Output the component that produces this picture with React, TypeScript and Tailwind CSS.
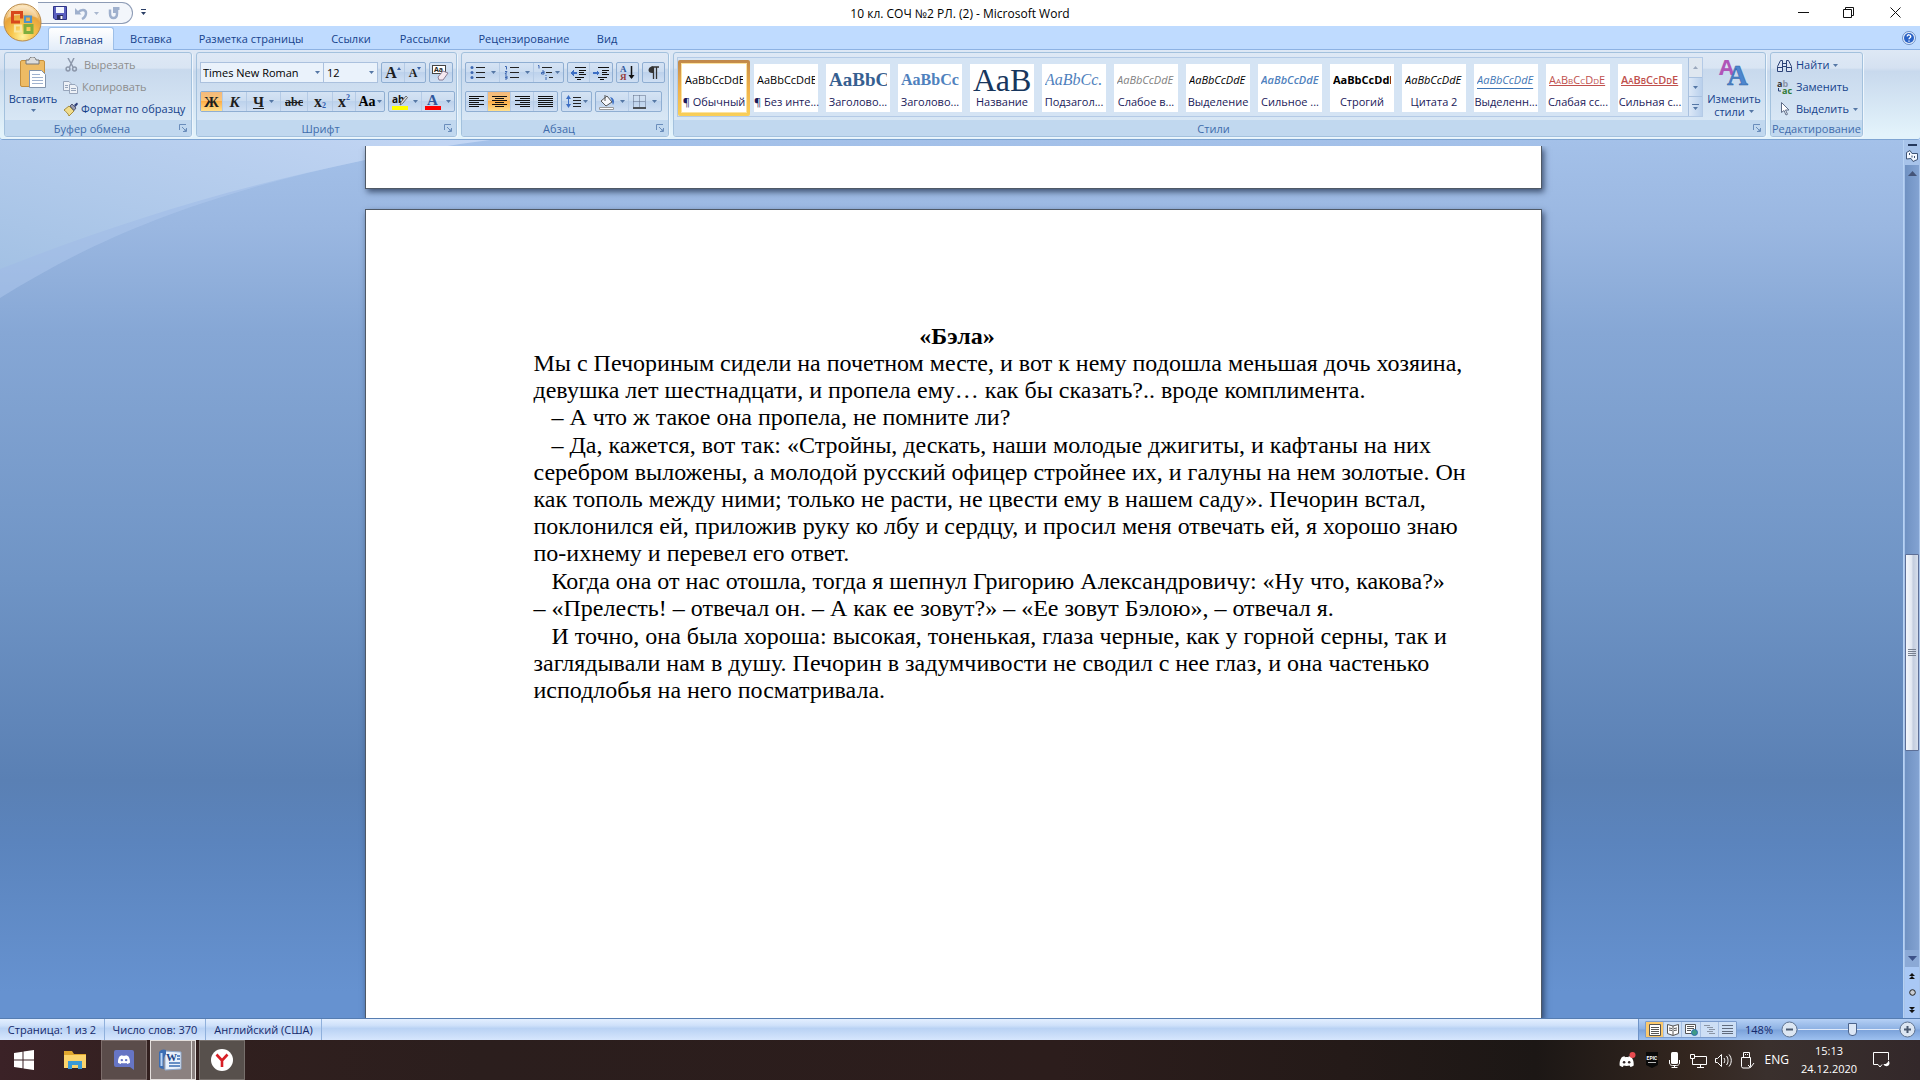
import type { ReactNode } from 'react'

const tabs = [
  { label: 'Вставка', width: 'w-[68px]' },
  { label: 'Разметка страницы', width: 'w-[132px]' },
  { label: 'Ссылки', width: 'w-[68px]' },
  { label: 'Рассылки', width: 'w-[80px]' },
  { label: 'Рецензирование', width: 'w-[118px]' },
  { label: 'Вид', width: 'w-[48px]' },
]

const styles = [
  { sample: 'AaBbCcDdE', label: '¶ Обычный', look: 'text-black', selected: true },
  { sample: 'AaBbCcDdE', label: '¶ Без инте...', look: 'text-black' },
  { sample: 'AaBbCc', label: 'Заголово...', look: "font-['Liberation_Serif'] text-[19px] font-bold text-[#365f91]" },
  { sample: 'AaBbCc', label: 'Заголово...', look: "font-['Liberation_Serif'] text-[16px] font-bold text-[#4f81bd]" },
  { sample: 'АаВ', label: 'Название', look: "font-['Liberation_Serif'] text-[32px] text-[#17365d]" },
  { sample: 'AaBbCc.', label: 'Подзагол...', look: "font-['Liberation_Serif'] text-[16px] italic text-[#4f81bd]" },
  { sample: 'AaBbCcDdE', label: 'Слабое в...', look: 'italic text-[#808080]' },
  { sample: 'AaBbCcDdE', label: 'Выделение', look: 'italic text-black' },
  { sample: 'AaBbCcDdE', label: 'Сильное ...', look: 'font-semibold italic text-[#4f81bd]' },
  { sample: 'AaBbCcDdE', label: 'Строгий', look: 'font-bold text-black' },
  { sample: 'AaBbCcDdE', label: 'Цитата 2', look: 'italic text-black' },
  { sample: 'AaBbCcDdE', label: 'Выделенн...', look: 'italic text-[#3f76b5] underline underline-offset-4' },
  { sample: 'AaBbCcDdE', label: 'Слабая сс...', look: 'text-[#c0504d] underline [font-variant:small-caps]' },
  { sample: 'AaBbCcDdE', label: 'Сильная с...', look: 'font-semibold text-[#c0504d] underline [font-variant:small-caps]' },
]

function Caret({ className = 'text-[#5577a5]' }: { className?: string }) {
  return (
    <svg className={`h-[3px] w-[5px] shrink-0 ${className}`} viewBox="0 0 5 3" fill="currentColor">
      <path d="M0 0h5L2.500 3z" />
    </svg>
  )
}

function Launcher() {
  return (
    <svg className="h-[9px] w-[9px]" viewBox="0 0 9 9" fill="none" stroke="#6a8dbb">
      <path d="M.5 6V.5H7" />
      <path d="M3 3l3.500 3.500M7.500 4v3.500H4" />
      <path d="M5 7h3V4z" fill="#6a8dbb" stroke="none" />
    </svg>
  )
}

function Group({ title, className, launcher = true, children }: {
  title: string
  className: string
  launcher?: boolean
  children: ReactNode
}) {
  return (
    <section
      className={`flex h-[85px] flex-col overflow-hidden rounded-[3px] border border-[#a3c1dd] bg-[linear-gradient(#dee8f5_0%,#d9e5f3_18%,#c8d9ed_20%,#d8e7f5_82%)] shadow-[1px_1px_0_#eef6fd] ${className}`}
    >
      <div className="min-h-0 flex-1">{children}</div>
      <div className="flex h-4 items-center bg-[#c1d8ef] text-[#3f6cab]">
        <h2 className="flex-1 pt-px text-center">{title}</h2>
        {launcher && (
          <button aria-label={`${title}: параметры`} className="mr-[3px]">
            <Launcher />
          </button>
        )}
      </div>
    </section>
  )
}

function Cluster({ children }: { children: ReactNode }) {
  return (
    <div className="flex h-[21px] divide-x divide-[#b5cbe6] rounded-[2px] border border-[#8faed2] bg-[linear-gradient(#d5e3f4_0%,#cbdcf0_45%,#bdd2ec_50%,#cfdff3_100%)]">
      {children}
    </div>
  )
}

function Tool({ name, width = 'w-[23px]', active, caret, children }: {
  name: string
  width?: string
  active?: boolean
  caret?: boolean
  children: ReactNode
}) {
  return (
    <button
      aria-label={name}
      className={`flex items-center justify-center gap-[5px] text-[#1e1e1e] ${width} ${
        active ? 'bg-[linear-gradient(#f3b97c_0%,#fbc578_45%,#fdae47_50%,#ffe08d_100%)]' : ''
      }`}
    >
      {children}
      {caret && <Caret />}
    </button>
  )
}

// each row is the [left, right] extent of one text line
function Lines({ rows }: { rows: number[][] }) {
  return (
    <svg className="h-[14px] w-[15px]" viewBox="0 0 15 14" stroke="#111" shapeRendering="crispEdges">
      {rows.map(([a, b], i) => (
        <path key={i} d={`M${a} ${i * 2 + 1.5}H${b}`} />
      ))}
    </svg>
  )
}

function ListIcon({ kind }: { kind: 'bullet' | 'number' | 'level' }) {
  return (
    <svg className="h-[15px] w-[16px]" viewBox="0 0 16 15">
      {kind === 'bullet' && (
        <g>
          <g fill="#3c66b0">
            <circle cx="2" cy="2.500" r="1.500" />
            <circle cx="2" cy="7.500" r="1.500" />
            <circle cx="2" cy="12.500" r="1.500" />
          </g>
          <path d="M6 2.500h9M6 7.500h9M6 12.500h9" stroke="#222" />
        </g>
      )}
      {kind === 'number' && (
        <g>
          <path d="M1 1.500h1.500v3M1 6.500h2l-2 2.500h2M1 11h2v3H1m0-1.500h2" stroke="#3c66b0" fill="none" />
          <path d="M6 2.500h9M6 7.500h9M6 12.500h9" stroke="#222" />
        </g>
      )}
      {kind === 'level' && (
        <g>
          <path d="M1 0.500h1v3M5 6h2v3H4.500V7.500H7M9 10v1m0 1v3" stroke="#3c66b0" fill="none" />
          <path d="M5 2.500h10M9 7.500h6M12 12.500h4" stroke="#222" />
        </g>
      )}
    </svg>
  )
}

function Indent({ flip }: { flip?: boolean }) {
  return (
    <svg className="h-[14px] w-[17px]" viewBox="0 0 17 14" shapeRendering="crispEdges">
      <path d="M5 1.500h11M9 4.500h7M9 6.500h5M9 8.500h7M5 11.500h9M7 13.500h4" stroke="#111" />
      <path d={flip ? 'M7 7L3.500 4v2H0v2h3.500v2z' : 'M0 7l3.500-3v2H7v2H3.500v2z'} fill="#3d6fc4" />
    </svg>
  )
}

function OfficeButton() {
  return (
    <button aria-label="Кнопка Office" className="absolute top-[3px] left-[3px] z-10">
      <svg className="h-[39px] w-[39px]" viewBox="0 0 39 39">
        <defs>
          <radialGradient id="orb" cx="50%" cy="88%" r="85%">
            <stop offset="0" stopColor="#fff3a0" />
            <stop offset=".35" stopColor="#f8c64c" />
            <stop offset=".7" stopColor="#e9a43c" />
            <stop offset="1" stopColor="#fbe3b8" />
          </radialGradient>
        </defs>
        <circle cx="19.500" cy="19.500" r="18.500" fill="url(#orb)" stroke="#b98a4a" />
        <path d="M4 15a16 16 0 0 1 31 0c-9-4-22-4-31 0z" fill="#fff" opacity=".35" />
        <g fill="none">
          <path d="M17 19H9.500V9.500h9v6" stroke="#d8481c" strokeWidth="3" />
          <path d="M22 13.500h6V19h-6z" stroke="#4e93c9" strokeWidth="2.200" />
          <path d="M12 22.500h6v6h-6z" stroke="#f9e6a0" strokeWidth="2.200" />
          <path d="M22 22.500h7v7h-7z" stroke="#7fae3e" strokeWidth="3" />
        </g>
      </svg>
    </button>
  )
}

function TitleBar() {
  return (
    <header className="relative flex h-[26px] items-start bg-white">
      <OfficeButton />
      <div className="mt-0.5 ml-[38px] flex h-[22px] w-[95px] items-center gap-2 rounded-r-full border border-l-0 border-[#8d9bb5] bg-[#f3f6fb] pl-[15px]">
        <button aria-label="Сохранить">
          <svg className="h-[14px] w-[14px]" viewBox="0 0 14 14">
            <path d="M.5.500h13v13H2L.500 12z" fill="#5a5fc0" stroke="#2f3487" />
            <path d="M3 1h8v6H3z" fill="#f2f6ff" />
            <path d="M4 9h6v4.500H4z" fill="#2a2d5f" />
            <path d="M7.500 10h2v3h-2z" fill="#fff" />
          </svg>
        </button>
        <button aria-label="Отменить" className="flex items-center gap-[6px]">
          <svg className="h-[13px] w-[13px]" viewBox="0 0 13 13" fill="none" stroke="#9fb0cd" strokeWidth="2.500">
            <path d="M3 5.500C6 2 11 2 11 6c0 3-2 5-4 6" />
            <path d="M0 1V7.500h6.500z" fill="#9fb0cd" stroke="none" />
          </svg>
          <Caret className="text-[#a9b7cf]" />
        </button>
        <button aria-label="Вернуть">
          <svg className="h-[13px] w-[13px]" viewBox="0 0 13 13" fill="none" stroke="#9fb0cd" strokeWidth="2.500">
            <path d="M3 2.500v4c0 6 7 6 7 0V3" />
            <path d="M6 0h6.500v3H9v3H6z" fill="#9fb0cd" stroke="none" />
          </svg>
        </button>
      </div>
      <button aria-label="Настройка панели" className="mt-[9px] ml-2">
        <svg className="h-[6px] w-[5px]" viewBox="0 0 5 6" fill="#2b3f66">
          <path d="M0 0h5v1H0zM0 3h5L2.500 6z" />
        </svg>
      </button>
      <h1 className="pointer-events-none absolute inset-x-0 top-1.5 text-center text-xs leading-4 text-black">
        10 кл. СОЧ №2 РЛ. (2) - Microsoft Word
      </h1>
      <div className="ml-auto flex pt-[5px]">
        <button aria-label="Свернуть" className="grid h-[15px] w-[46px] place-items-center">
          <svg className="h-[11px] w-[11px]" viewBox="0 0 11 11" stroke="#111"><path d="M0 5.500h11" /></svg>
        </button>
        <button aria-label="Восстановить" className="grid h-[15px] w-[45px] place-items-center">
          <svg className="h-[11px] w-[11px]" viewBox="0 0 11 11" fill="none" stroke="#111">
            <path d="M.5 2.500h8v8h-8zM2.500 2.500v-2h8v8h-2" />
          </svg>
        </button>
        <button aria-label="Закрыть" className="grid h-[15px] w-[49px] place-items-center">
          <svg className="h-[11px] w-[11px]" viewBox="0 0 11 11" stroke="#111"><path d="M.5.500l10 10M10.500.500l-10 10" /></svg>
        </button>
      </div>
    </header>
  )
}

function TabBar() {
  return (
    <nav className="flex h-6 items-end border-b border-[#8db2e3] bg-[#bfdbff] pl-12 text-[#15428b]">
      <button className="-mb-px h-[23px] w-[66px] rounded-t-[3px] border border-b-0 border-[#9dbfe8] bg-[linear-gradient(#ffffff,#e3edf9)] pt-px">
        Главная
      </button>
      <div className="flex pb-0.5 pl-[3px]">
        {tabs.map(({ label, width }) => (
          <button key={label} className={`whitespace-nowrap ${width}`}>
            {label}
          </button>
        ))}
      </div>
      <button aria-label="Справка" className="mr-1 mb-1 ml-auto">
        <svg className="h-[14px] w-[14px]" viewBox="0 0 14 14">
          <circle cx="7" cy="7" r="6.500" fill="#e8f1fd" stroke="#6d8fc4" />
          <circle cx="7" cy="7" r="5" fill="#2a62c6" />
          <path d="M5.200 5.500c0-2.400 3.600-2.200 3.600 0C8.800 6.800 7 6.800 7 8.300M7 9.500v1.300" stroke="#fff" strokeWidth="1.300" fill="none" />
        </svg>
      </button>
    </nav>
  )
}

function Clipboard() {
  return (
    <Group title="Буфер обмена" className="w-[188px]">
      <div className="flex h-full text-[#15428b]">
        <button className="flex w-14 flex-col items-center pt-1">
          <svg className="h-[32px] w-[28px]" viewBox="0 0 28 32">
            <rect x="1.500" y="3.500" width="24" height="26" rx="1.500" fill="#eebb64" stroke="#c48f3e" />
            <path d="M7 3h3c0-4 7-4 7 0h3v4H7z" fill="#dcdcdc" stroke="#777" />
            <path d="M10.500 13.500h12l4 4v13h-16z" fill="#fff" stroke="#8294ad" />
            <path d="M13 17.500h8M13 20.500h11M13 23.500h11M13 26.500h11" stroke="#9fb2cf" />
          </svg>
          <span className="mt-0.5">Вставить</span>
          <span className="mt-0.5"><Caret /></span>
        </button>
        <div className="flex flex-col gap-1.5 pt-1 pl-0.5">
          <button className="flex h-4 items-center gap-1.5 pl-0.5 text-[#8d8d8d]">
            <svg className="h-[14px] w-[13px]" viewBox="0 0 13 14" fill="none" stroke="#8d98ab" strokeWidth="1.500">
              <path d="M3 0l5 9M9 0L4.500 9" />
              <circle cx="3" cy="11" r="1.900" />
              <circle cx="9.500" cy="11" r="1.900" />
            </svg>
            Вырезать
          </button>
          <button className="flex h-4 items-center gap-1 text-[#8d8d8d]">
            <svg className="h-[13px] w-[15px]" viewBox="0 0 15 13" fill="#edf1f7" stroke="#97a5bb">
              <path d="M.5.500H6l2 2v7H.500z" />
              <path d="M6.500 3.500H12l2.500 2.500v6.500h-8z" />
              <path d="M8 7.500h5M8 9.500h5M2 4.500h3M2 6.500h3" />
            </svg>
            Копировать
          </button>
          <button className="flex h-4 items-center gap-0.5 whitespace-nowrap">
            <svg className="h-[14px] w-[16px]" viewBox="0 0 16 14">
              <path d="M1 8l5-4 5 5-5 5c-1-3-3-4-5-6z" fill="#f0dc8c" stroke="#a58d3d" />
              <path d="M7 4l2-2 4 4-2 2.500z" fill="#9a9db0" stroke="#555b77" />
              <path d="M11 3l3-2.500L15 2l-2.500 3z" fill="#2c3d78" />
            </svg>
            Формат по образцу
          </button>
        </div>
      </div>
    </Group>
  )
}

function FontGroup() {
  return (
    <Group title="Шрифт" className="w-[261px]">
      <div className="flex flex-col gap-2 pt-[9px] pl-[3px]">
        <div className="flex gap-[3px]">
          <div className="flex h-[21px] text-black">
            <label className="relative flex items-center">
              <select aria-label="Шрифт" className="h-full w-[124px] appearance-none border border-[#abc1de] bg-[#eaf2fb] pl-0.5">
                <option>Times New Roman</option>
              </select>
              <span className="pointer-events-none absolute right-1"><Caret /></span>
            </label>
            <label className="relative flex items-center">
              <select aria-label="Размер шрифта" className="h-full w-[54px] appearance-none border border-l-0 border-[#abc1de] bg-[#eaf2fb] pl-[3px]">
                <option>12</option>
              </select>
              <span className="pointer-events-none absolute right-1"><Caret /></span>
            </label>
          </div>
          <Cluster>
            <Tool name="Увеличить размер">
              <span className="flex font-['Liberation_Serif'] text-base leading-5 font-bold">A<i className="mt-1 h-0 border-x-2 border-b-[3px] border-x-transparent border-b-[#3b63a8]" /></span>
            </Tool>
            <Tool name="Уменьшить размер" width="w-[20px]">
              <span className="flex font-['Liberation_Serif'] text-xs leading-5 font-bold">A<i className="mt-1 h-0 border-x-2 border-t-[3px] border-x-transparent border-t-[#3b63a8]" /></span>
            </Tool>
          </Cluster>
          <Cluster>
            <Tool name="Очистить формат" width="w-[22px]">
              <svg className="h-[17px] w-[18px]" viewBox="0 0 18 17">
                <rect x=".5" y="1.500" width="13" height="8" fill="#fff" stroke="#444" />
                <text x="2" y="8" fontSize="7" fontWeight="700" fontFamily="Open Sans, sans-serif" fill="#222">Aa</text>
                <path d="M6 13l5-6 5 2-5 7H7z" fill="#f4e8f0" stroke="#8a7d94" />
              </svg>
            </Tool>
          </Cluster>
        </div>
        <div className="flex gap-[3px] font-['Liberation_Serif'] text-[15px] font-bold">
          <Cluster>
            <Tool name="Полужирный" width="w-[22px]" active>Ж</Tool>
            <Tool name="Курсив" width="w-6"><em>К</em></Tool>
            <Tool name="Подчеркнутый" width="w-[34px]" caret><u>Ч</u></Tool>
            <Tool name="Зачеркнутый" width="w-[27px]"><s className="text-xs">abc</s></Tool>
            <Tool name="Подстрочный" width="w-[25px]">
              <span className="flex items-end text-base leading-4">x<small className="text-[8px] leading-[8px] text-[#2f5db0]">2</small></span>
            </Tool>
            <Tool name="Надстрочный" width="w-[23px]">
              <span className="flex items-start text-base leading-4">x<small className="text-[8px] leading-[8px] text-[#2f5db0]">2</small></span>
            </Tool>
            <button aria-label="Регистр" className="flex w-[28px] items-center justify-center gap-px text-sm">Aa<Caret /></button>
          </Cluster>
          <Cluster>
            <Tool name="Цвет выделения" width="w-[33px]" caret>
              <svg className="h-[16px] w-[16px] overflow-visible" viewBox="0 0 16 16">
                <text x="0" y="9" fontSize="10" fontWeight="700" fontFamily="Open Sans, sans-serif" fill="#111">ab</text>
                <path d="M8 11l1-3 5-6 1.500 1.500-5 6z" fill="#ddd" stroke="#555" strokeWidth=".8" />
                <path d="M0 12h16v4H0z" fill="#ff0" />
              </svg>
            </Tool>
            <Tool name="Цвет текста" width="w-[32px]" caret>
              <svg className="h-[16px] w-[16px] overflow-visible" viewBox="0 0 16 16">
                <text x="2" y="11" fontSize="15" fontWeight="700" fontFamily="Liberation Serif, serif" fill="#2f579c">A</text>
                <path d="M0 12h16v4H0z" fill="#f00" />
              </svg>
            </Tool>
          </Cluster>
        </div>
      </div>
    </Group>
  )
}

function ParagraphGroup() {
  return (
    <Group title="Абзац" className="w-[208px]">
      <div className="flex flex-col gap-2 pt-[9px] pl-[3px]">
        <div className="flex gap-[3px]">
          <Cluster>
            <Tool name="Маркеры" width="w-[34px]" caret><ListIcon kind="bullet" /></Tool>
            <Tool name="Нумерация" width="w-[34px]" caret><ListIcon kind="number" /></Tool>
            <button aria-label="Многоуровневый список" className="flex w-[29px] items-center justify-center gap-0.5"><ListIcon kind="level" /><Caret /></button>
          </Cluster>
          <Cluster>
            <Tool name="Уменьшить отступ" width="w-[22px]"><Indent /></Tool>
            <Tool name="Увеличить отступ" width="w-[22px]"><Indent flip /></Tool>
          </Cluster>
          <Cluster>
            <Tool name="Сортировка" width="w-[21px]">
              <svg className="h-[17px] w-[15px] overflow-visible" viewBox="0 0 15 17">
                <text x="0" y="8" fontSize="9" fontWeight="700" fontFamily="Liberation Serif, serif" fill="#2f579c">А</text>
                <text x="0" y="16" fontSize="9" fontWeight="700" fontFamily="Liberation Serif, serif" fill="#963a3a">Я</text>
                <path d="M11.500 2v12" stroke="#111" strokeWidth="1.500" />
                <path d="M8.500 11h6l-3 4z" fill="#111" />
              </svg>
            </Tool>
          </Cluster>
          <Cluster>
            <Tool name="Знаки абзаца" width="w-[21px]">
              <svg className="h-[13px] w-[11px]" viewBox="0 0 11 13">
                <path d="M5 7C-1 7.500-1 .5 5 .5z" fill="#333" />
                <path d="M3.500 1H11M5.500 1v12M8.500 1v12" stroke="#333" strokeWidth="1.300" />
              </svg>
            </Tool>
          </Cluster>
        </div>
        <div className="flex gap-[3px]">
          <Cluster>
            <Tool name="По левому краю" width="w-[22px]"><Lines rows={[[0, 15], [0, 10], [0, 15], [0, 10], [0, 15], [0, 10]]} /></Tool>
            <Tool name="По центру" active><Lines rows={[[0, 15], [3, 12], [0, 15], [3, 12], [0, 15], [3, 12]]} /></Tool>
            <Tool name="По правому краю"><Lines rows={[[0, 15], [5, 15], [0, 15], [5, 15], [0, 15], [5, 15]]} /></Tool>
            <Tool name="По ширине"><Lines rows={[[0, 15], [0, 15], [0, 15], [0, 15], [0, 15], [0, 15]]} /></Tool>
          </Cluster>
          <Cluster>
            <button aria-label="Интервал" className="flex w-[29px] items-center justify-center gap-0.5">
              <svg className="h-[15px] w-[15px]" viewBox="0 0 15 15">
                <path d="M2.500 3v9" stroke="#3d6fc4" />
                <path d="M0 5l2.500-4L5 5zM0 10l2.500 4L5 10z" fill="#3d6fc4" />
                <path d="M7 3.500h8M7 6.500h8M7 9.500h8M7 12.500h8" stroke="#222" />
              </svg>
              <Caret />
            </button>
          </Cluster>
          <Cluster>
            <Tool name="Заливка" width="w-[33px]" caret>
              <svg className="h-[16px] w-[16px]" viewBox="0 0 16 16">
                <path d="M2 7l6-5 5 6-6 4z" fill="#f7f8fb" stroke="#555" />
                <path d="M6 1v6" stroke="#555" />
                <path d="M11 3c4 1 5 4 3 8-1-3-1-5-3-8z" fill="#3d6fc4" />
                <path d="M.5 13.500h14v2H.500z" fill="#fff" stroke="#9a9a9a" />
              </svg>
            </Tool>
            <Tool name="Границы" width="w-[32px]" caret>
              <svg className="h-[14px] w-[14px]" viewBox="0 0 14 14" stroke="#5c6b84" fill="none">
                <path d="M.5.500h12v12M.500.500v12M6.500.500v12M.500 6.500h12" strokeDasharray="1 1" />
                <path d="M0 13h13" stroke="#222" strokeWidth="1.500" />
              </svg>
            </Tool>
          </Cluster>
        </div>
      </div>
    </Group>
  )
}

function StylesGroup() {
  return (
    <Group title="Стили" className="min-w-0 flex-1">
      <div className="flex pt-1 pl-[3px]">
        <div className="flex h-[60px] min-w-0 flex-1 border border-[#b4cae6] bg-[#d5e4f4]">
          <div className="flex min-w-0 flex-1 items-start overflow-hidden pt-0.5">
            {styles.map(({ sample, label, look, selected }, i) => (
              <button
                key={i}
                className={`h-[56px] w-[72px] shrink-0 p-1 ${
                  selected ? 'rounded-[2px] bg-[linear-gradient(#c0884a,#f0b04a_50%,#f9cf58)]' : ''
                }`}
              >
                <span className={`flex h-12 flex-col bg-white text-[#1a1a5a] ${selected ? 'outline outline-1 outline-[#fbe3a0]' : ''}`}>
                  <span className={`mx-[3px] mt-0.5 flex h-[27px] items-center overflow-hidden whitespace-nowrap ${look}`}>
                    {sample}
                  </span>
                  <span className="pt-px text-center leading-4 whitespace-nowrap">{label}</span>
                </span>
              </button>
            ))}
          </div>
          <div className="flex w-[14px] flex-col divide-y divide-[#a9c1df] border-l border-[#a9c1df] bg-[linear-gradient(90deg,#dce8f7,#b9d0ec)]">
            <button aria-label="Вверх" className="grid flex-1 place-items-center bg-[#dfe7f0]">
              <svg className="h-[3px] w-[5px]" viewBox="0 0 5 3" fill="#9aa8bd"><path d="M0 3h5L2.500 0z" /></svg>
            </button>
            <button aria-label="Вниз" className="grid flex-1 place-items-center"><Caret /></button>
            <button aria-label="Все стили" className="grid flex-1 place-items-center">
              <svg className="h-[6px] w-[7px]" viewBox="0 0 7 6" fill="#5577a5"><path d="M0 0h7v1H0zM1 3h5L3.500 6z" /></svg>
            </button>
          </div>
        </div>
        <button className="flex w-[62px] flex-col items-center pt-px leading-[13px] text-[#15428b]">
          <svg className="h-[28px] w-[30px] overflow-visible" viewBox="0 0 30 28">
            <text x="0" y="17" fontSize="22" fontWeight="700" fontFamily="Open Sans, sans-serif" fill="#b055b8">A</text>
            <text x="8" y="27" fontSize="29" fontWeight="700" fontFamily="Liberation Serif, serif" fill="#4c86cf" stroke="#2f5fa3" strokeWidth=".5">A</text>
          </svg>
          <span className="mt-1.5">Изменить</span>
          <span className="flex items-center gap-1">стили <Caret /></span>
        </button>
      </div>
    </Group>
  )
}

function EditGroup() {
  return (
    <Group title="Редактирование" className="w-[93px]" launcher={false}>
      <div className="flex flex-col gap-1.5 pt-1 pl-1.5 text-[#15428b]">
        <button className="flex h-4 items-center gap-1">
          <svg className="h-[13px] w-[15px]" viewBox="0 0 15 13" fill="#dfe7f7" stroke="#2c4377">
            <path d="M.5 12.500v-5l3-6h2v11zM9.500 12.500v-11h2l3 6v5zM5.500 4.500h4v3h-4zM.5 8.500h5M9.500 8.500h5" />
          </svg>
          Найти
          <Caret />
        </button>
        <button className="flex h-4 items-center gap-1">
          <svg className="h-[15px] w-[15px] overflow-visible" viewBox="0 0 15 15" fontFamily="Open Sans, sans-serif" fontSize="9" fontWeight="700">
            <text x="0" y="7" fill="#333">a<tspan fill="#8b94a6">b</tspan></text>
            <text x="5" y="14" fill="#2f7a35">ac</text>
            <path d="M1.500 8v3H4" stroke="#2c4377" fill="none" />
          </svg>
          Заменить
        </button>
        <button className="flex h-4 items-center gap-1">
          <svg className="h-[14px] w-[15px]" viewBox="0 0 15 14" fill="#fff" stroke="#5f6d88">
            <path d="M4.500.500v10l2.500-2 2 4.500 1.500-.700L8.500 8H12z" />
          </svg>
          Выделить
          <Caret />
        </button>
      </div>
    </Group>
  )
}

function Ribbon() {
  return (
    <div className="flex h-[90px] gap-1 rounded-b-[3px] border-b border-[#7fa5d3] bg-[linear-gradient(#dee8f5_0%,#d5e1f1_20%,#c8d9ed_24%,#e3f3fb_95%)] pt-0.5 pr-[57px] pl-1">
      <Clipboard />
      <FontGroup />
      <ParagraphGroup />
      <StylesGroup />
      <EditGroup />
    </div>
  )
}

function ScrollBar() {
  return (
    <div className="flex w-[17px] flex-col border-l border-[#b7d2f3] bg-[#a7c3ea] px-px">
      <div className="flex h-[25px] flex-col items-center gap-1 pt-1">
        <span className="h-0.5 w-[9px] bg-[#26395d]" />
        <button aria-label="Линейка">
          <svg className="h-[12px] w-[12px]" viewBox="0 0 12 12" fill="#f4f8ff" stroke="#3f5475">
            <path d="M.5 2.500L4 .500l2 3h5.500v6L7 11.500l-2-3-4.500.500z" />
            <path d="M3.500 3v2M6 5.500v2M8.500 6v2" />
          </svg>
        </button>
      </div>
      <div className="flex flex-1 flex-col bg-[linear-gradient(90deg,#6f91c2,#83a3d2)]">
        <button aria-label="Прокрутить вверх" className="grid h-[17px] place-items-center">
          <svg className="h-[5px] w-[9px]" viewBox="0 0 9 5" fill="#445478"><path d="M0 5h9L4.500 0z" /></svg>
        </button>
        <div className="h-[372px]" />
        <div className="grid h-[197px] place-items-center rounded-[1px] border border-[#5d6f96] bg-[linear-gradient(90deg,#f4f7fc,#e3e9f2_45%,#c3cdde_60%,#d7dfec)]">
          <svg className="h-[8px] w-[8px]" viewBox="0 0 8 8" stroke="#77808f"><path d="M0 .500h8M0 2.500h8M0 4.500h8M0 6.500h8" /></svg>
        </div>
        <div className="flex-1" />
        <button aria-label="Прокрутить вниз" className="grid h-[17px] place-items-center bg-[#8ba9d6]">
          <svg className="h-[5px] w-[9px]" viewBox="0 0 9 5" fill="#3d5288"><path d="M0 0h9L4.500 5z" /></svg>
        </button>
      </div>
      <div className="flex h-[51px] flex-col bg-[#a9c8f5]">
        <button aria-label="Предыдущая страница" className="grid flex-1 place-items-center">
          <svg className="h-[6px] w-[6px]" viewBox="0 0 6 6" fill="#111"><path d="M0 3l3-3 3 3zM0 6l3-3 3 3z" /></svg>
        </button>
        <button aria-label="Объект перехода" className="grid flex-1 place-items-center">
          <svg className="h-[7px] w-[7px]" viewBox="0 0 7 7"><circle cx="3.500" cy="3.500" r="2.800" fill="#c9ccd2" stroke="#222" /></svg>
        </button>
        <button aria-label="Следующая страница" className="grid flex-1 place-items-center">
          <svg className="h-[6px] w-[6px]" viewBox="0 0 6 6" fill="#111"><path d="M0 0h6L3 3zM0 3h6L3 6z" /></svg>
        </button>
      </div>
    </div>
  )
}

function Pages() {
  const sheet = 'border border-[#4f5966] bg-white shadow-[2px_3px_6px_rgba(30,45,75,0.75)]'
  return (
    <div className="relative mt-1.5 flex min-h-0 flex-1 flex-col items-center overflow-hidden pl-[3px]">
      <div className={`h-[43px] w-[1177px] max-w-full shrink-0 border-t-0 ${sheet}`} />
      <article
        className={`mt-5 w-[1177px] max-w-full flex-1 border-b-0 pt-[113px] pr-20 pl-[168px] font-['Liberation_Serif'] text-2xl leading-[27px] whitespace-pre text-black ${sheet}`}
      >
        <h2 className="pr-20 text-center font-bold">«Бэла»</h2>
        <p>
          Мы с Печориным сидели на почетном месте, и вот к нему подошла меньшая дочь хозяина,<br />
          девушка лет шестнадцати, и пропела ему… как бы сказать?.. вроде комплимента.
        </p>
        <p>{'   – А что ж такое она пропела, не помните ли?'}</p>
        <p className="mt-px">
          {'   – Да, кажется, вот так: «Стройны, дескать, наши молодые джигиты, и кафтаны на них'}<br />
          серебром выложены, а молодой русский офицер стройнее их, и галуны на нем золотые. Он<br />
          как тополь между ними; только не расти, не цвести ему в нашем саду». Печорин встал,<br />
          поклонился ей, приложив руку ко лбу и сердцу, и просил меня отвечать ей, я хорошо знаю<br />
          по-ихнему и перевел его ответ.
        </p>
        <p className="mt-px">
          {'   Когда она от нас отошла, тогда я шепнул Григорию Александровичу: «Ну что, какова?»'}<br />
          – «Прелесть! – отвечал он. – А как ее зовут?» – «Ее зовут Бэлою», – отвечал я.
        </p>
        <p className="mt-px">
          {'   И точно, она была хороша: высокая, тоненькая, глаза черные, как у горной серны, так и'}<br />
          заглядывали нам в душу. Печорин в задумчивости не сводил с нее глаз, и она частенько<br />
          исподлобья на него посматривала.
        </p>
      </article>
    </div>
  )
}

function Workspace() {
  return (
    <main className="flex min-h-0 flex-1 bg-[linear-gradient(#a4c1e9_0%,#9ab7e1_10%,#86a7d5_22%,#6f94c5_50%,#5a80b4_73%,#5b84bd_80%,#6692d0_97%)]">
      <div className="relative flex min-w-0 flex-1 flex-col">
        <svg className="absolute top-0 left-0 h-[160px] w-[520px]" viewBox="0 140 520 160">
          <defs>
            <linearGradient id="haze" x1="0" y1="1" x2="1" y2="0">
              <stop offset="0" stopColor="#a3c1e4" />
              <stop offset="1" stopColor="#c3d6f4" />
            </linearGradient>
          </defs>
          <path d="M0 298C90 242 190 197 365 160L300 140H0z" fill="#b4cdf0" opacity=".45" />
          <path d="M0 269C120 222 230 188 365 160C410 152 450 145 490 140H0z" fill="url(#haze)" />
        </svg>
        <Pages />
      </div>
      <ScrollBar />
    </main>
  )
}

function StatusBar() {
  return (
    <footer className="flex h-[22px] items-stretch border-t border-[#567db1] bg-[linear-gradient(#e3efff_0%,#cfe1fa_30%,#b9d2f4_45%,#d6e6fd_100%)] text-[#15296b]">
      <button className="w-[105px] border-r border-[#8fb0dc] text-center">Страница: 1 из 2</button>
      <button className="w-[101px] border-r border-[#8fb0dc] text-center">Число слов: 370</button>
      <button className="w-[116px] border-r border-[#8fb0dc] text-center">Английский (США)</button>
      <div className="ml-auto flex w-[282px] items-center border-l border-[#6f94c8] bg-[linear-gradient(#b5d0f5_0%,#8db1e3_48%,#7ba2da_52%,#9dc0ef_100%)] pl-[6px]">
        <div className="flex h-[17px] w-[92px] divide-x divide-[#a6bfe2] rounded-[1px] border border-[#7a9bcc] bg-[#cddff5]">
          <button aria-label="Разметка страницы" className="grid flex-1 place-items-center bg-[#fbc96c]">
            <svg className="h-[12px] w-[12px]" viewBox="0 0 12 12" fill="#fff" stroke="#555"><path d="M.5.500h11v11H.500zM2 3.500h8M2 5.500h8M2 7.500h8M2 9.500h8" /></svg>
          </button>
          <button aria-label="Режим чтения" className="grid flex-1 place-items-center">
            <svg className="h-[12px] w-[12px]" viewBox="0 0 12 12" fill="#fff" stroke="#555"><path d="M.5.500L6 2l5.500-1.500v9L6 11.500.5 9.500zM6 2v9M2 4l3 .5M2 6l3 .5M10 4l-3 .5M10 6l-3 .5" /></svg>
          </button>
          <button aria-label="Веб-документ" className="grid flex-1 place-items-center">
            <svg className="h-[12px] w-[13px]" viewBox="0 0 13 12" fill="#fff" stroke="#555">
              <path d="M.5.500h10v9H.500zM2 2.500h7M2 4.500h7M2 6.500h4" />
              <circle cx="9.500" cy="8.500" r="3" fill="#3f9a85" stroke="#2f6fae" />
            </svg>
          </button>
          <button aria-label="Структура" className="grid flex-1 place-items-center">
            <svg className="h-[11px] w-[11px]" viewBox="0 0 11 11" stroke="#8a95a5"><path d="M0 1.500h6M3 3.500h6M5 5.500h6M3 7.500h6M5 9.500h6" /></svg>
          </button>
          <button aria-label="Черновик" className="grid flex-1 place-items-center">
            <svg className="h-[11px] w-[11px]" viewBox="0 0 11 11" stroke="#606b7d"><path d="M0 1.500h11M0 4.500h11M0 7.500h11M0 9.500h11" /></svg>
          </button>
        </div>
        <span className="w-[44px] text-center">148%</span>
        <button aria-label="Уменьшить">
          <svg className="h-[17px] w-[17px]" viewBox="0 0 17 17">
            <circle cx="8.500" cy="8.500" r="7.500" fill="#dce6f2" stroke="#5f7390" />
            <path d="M5 8.500h7" stroke="#4b5a70" strokeWidth="2" />
          </svg>
        </button>
        <input
          type="range"
          aria-label="Масштаб"
          defaultValue={54}
          className="h-[17px] w-[101px] appearance-none bg-[linear-gradient(#dfeafa,#dfeafa)] bg-[length:100%_1px] bg-center bg-no-repeat [&::-webkit-slider-thumb]:h-[13px] [&::-webkit-slider-thumb]:w-[9px] [&::-webkit-slider-thumb]:appearance-none [&::-webkit-slider-thumb]:rounded-b-[4px] [&::-webkit-slider-thumb]:border [&::-webkit-slider-thumb]:border-[#4c648c] [&::-webkit-slider-thumb]:bg-[#dce7f6]"
        />
        <button aria-label="Увеличить">
          <svg className="h-[17px] w-[17px]" viewBox="0 0 17 17">
            <circle cx="8.500" cy="8.500" r="7.500" fill="#dce6f2" stroke="#5f7390" />
            <path d="M5 8.500h7M8.500 5v7" stroke="#4b5a70" strokeWidth="2" />
          </svg>
        </button>
      </div>
    </footer>
  )
}

const discordShape =
  'M3 3C5 1.800 6 1.700 6.500 1.600L7 2.500c1.300-.2 2.700-.2 4 0l.5-.9c.5.100 1.500.200 3.500 1.400 2 3 2.500 6 2.300 9.300-1.300 1-2.600 1.500-3.800 1.700l-1-1.600c-2.200.700-4.800.700-7 0l-1 1.600C3.300 13.800 2 13.300.7 12.300.5 9 1 6 3 3z'

function TaskBar() {
  return (
    <div className="flex h-10 items-stretch bg-[linear-gradient(90deg,#3b2227_0%,#32201f_8%,#2b1e1d_25%,#2c1d1c_55%,#241a18_70%,#1c1715_80%,#33261f_88%,#3a302d_92%,#33282a_100%)] text-white">
      <button aria-label="Пуск" className="grid w-12 place-items-center">
        <svg className="h-5 w-5" viewBox="0 0 20 20" fill="#fff">
          <path d="M0 3l8.500-1.200v7.700H0zM9.500 1.600L20 0v9.500H9.500zM0 10.500h8.500v7.700L0 17zM9.500 10.500H20V20L9.500 18.400z" />
        </svg>
      </button>
      <button aria-label="Проводник" className="grid w-[53px] place-items-center">
        <svg className="h-5 w-[22px]" viewBox="0 0 22 20">
          <path d="M0 1h8l2 3h12v14H0z" fill="#e0a72e" />
          <path d="M0 5h22v13H0z" fill="#fbd46c" />
          <path d="M4 19v-8h14v8h-4v-4H8v4z" fill="#3b9ad6" />
        </svg>
      </button>
      <button aria-label="Discord" className="grid w-[46px] place-items-center border border-[#7c6d6b] bg-[#5a4c4a]">
        <svg className="h-5 w-5" viewBox="0 0 20 20">
          <path d="M2 0h16a2 2 0 0 1 2 2v18l-4-3H2a2 2 0 0 1-2-2V2a2 2 0 0 1 2-2z" fill="#6675c4" />
          <g transform="translate(3.500 4) scale(.72)">
            <path d={discordShape} fill="#fff" />
            <circle cx="6" cy="8.500" r="1.700" fill="#6675c4" />
            <circle cx="12" cy="8.500" r="1.700" fill="#6675c4" />
          </g>
        </svg>
      </button>
      <div className="ml-[3px] flex">
        <button aria-label="Word" className="grid w-[42px] place-items-center border border-[#e4dfdd] bg-[#8b8180]">
          <svg className="h-[22px] w-[24px]" viewBox="0 0 24 22">
            <path d="M6 2l16 1v17L6 21z" fill="#e9f1fb" stroke="#8fa9cd" />
            <path d="M0 3c2-3 5-3 7-2v4c-3 4-3 10-2 15-2 0-4-1-5-2z" fill="#3a6db4" />
            <path d="M2.500 4v13" stroke="#b9d4f4" strokeWidth="2" />
            <text x="7" y="12" fontSize="11" fontWeight="700" fontFamily="Liberation Serif, serif" fill="#1f4788">W</text>
            <path d="M18 7h3M18 10h3M10 14h11M10 17h11" stroke="#3a6db4" strokeWidth="1.500" />
          </svg>
        </button>
        <span className="w-1 border-y border-r border-[#e4dfdd] bg-[#8b8180]" />
      </div>
      <button aria-label="Яндекс" className="ml-[3px] grid w-[46px] place-items-center border border-[#77706c] bg-[#57504c]">
        <svg className="h-[22px] w-[22px]" viewBox="0 0 22 22">
          <circle cx="11" cy="11" r="11" fill="#fff" />
          <path d="M5.500 5.500L11 11.500l5.500-6M11 11v7" stroke="#d81f26" strokeWidth="2.600" fill="none" />
        </svg>
      </button>
      <div className="ml-auto flex items-center gap-2 pr-[30px]">
        <svg className="h-[16px] w-[18px]" viewBox="0 0 18 16">
          <g transform="translate(0 3) scale(.85)">
            <path d={discordShape} fill="#fff" />
            <circle cx="6" cy="8.500" r="1.500" fill="#33282a" />
            <circle cx="12" cy="8.500" r="1.500" fill="#33282a" />
          </g>
          <circle cx="13.500" cy="3" r="3" fill="#e94b50" />
        </svg>
        <svg className="h-[16px] w-[14px]" viewBox="0 0 14 16">
          <path d="M1 0h12v13l-6 3-6-3z" fill="#0a0a0a" />
          <text x="7" y="8" fontSize="5" fontWeight="700" textAnchor="middle" fontFamily="Roboto, sans-serif" fill="#fff">EPIC</text>
          <path d="M3 10.500h8" stroke="#bbb" />
        </svg>
        <svg className="mx-0.5 h-[16px] w-[11px]" viewBox="0 0 11 16" fill="#fff">
          <rect x="2" y="0" width="7" height="12" rx="1.500" />
          <path d="M.5 8v3c0 2 2 2.500 3 2.500h4c1 0 3-.5 3-2.500V8M5.500 13v2.500M2.500 15.500h6" fill="none" stroke="#fff" />
        </svg>
        <svg className="h-[15px] w-[17px]" viewBox="0 0 17 15" fill="none" stroke="#fff">
          <path d="M5 3.500h11.500v8H5M10.500 11.500v3M7 14.500h7M.5 1.500h4v4h-4zM2.500 5.500v6H5" />
        </svg>
        <svg className="h-[15px] w-[17px]" viewBox="0 0 17 15" fill="none" stroke="#fff">
          <path d="M.5 5.500h2l4-4v12l-4-4h-2zM9 5c1 1.500 1 3.500 0 5M11.500 3c2 2.500 2 6.500 0 9M14 1.500c3 3.500 3 8.500 0 12" />
        </svg>
        <svg className="h-[17px] w-[15px]" viewBox="0 0 15 17" fill="none" stroke="#fff">
          <path d="M3.500 5V.500h6V5M1.500 5.500h9v9l-1 1.500h-7l-1-1.500zM5.500 2v1M7.500 2v1" />
          <path d="M8 13l2.500 2.500L14 11" />
        </svg>
        <span className="ml-0.5 text-xs">ENG</span>
        <time className="flex w-[64px] flex-col text-center text-[11px] leading-[18px]">
          <span>15:13</span>
          <span>24.12.2020</span>
        </time>
        <button aria-label="Уведомления" className="ml-1">
          <svg className="h-[16px] w-[17px]" viewBox="0 0 17 16" fill="none" stroke="#fff">
            <path d="M9 12.500l-2 2.500-2-2.500H.500V.500h15V8" />
            <path d="M15.500 8.500c-1 3-3 4-5 3.500 1 3 5.500 3 6-.500 0-1.200-.3-2.200-1-3z" fill="#fff" stroke="none" />
          </svg>
        </button>
      </div>
    </div>
  )
}

export default function App() {
  return (
    <div className="flex h-screen flex-col overflow-hidden bg-[#bfdbff] font-['Open_Sans','Noto_Sans',sans-serif] text-[11px] leading-4">
      <TitleBar />
      <TabBar />
      <Ribbon />
      <Workspace />
      <StatusBar />
      <TaskBar />
    </div>
  )
}
